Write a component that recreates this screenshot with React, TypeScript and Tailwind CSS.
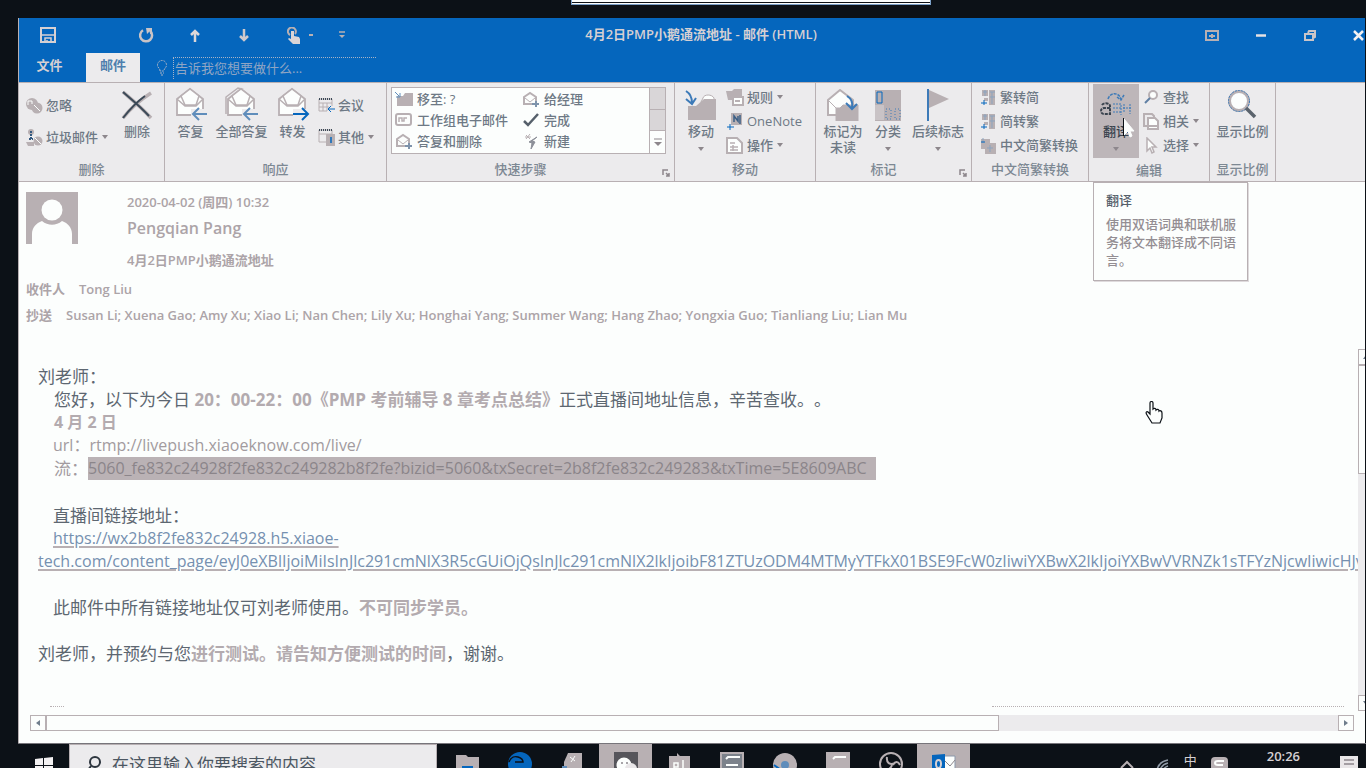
import type { ReactNode } from "react";

const INK = "#8d878c";
const GRAY = "#b8b0b3";
const BLUE = "#0566bd";

function Svg({ w, h, children, className = "" }: { w: number; h: number; children: ReactNode; className?: string }) {
  return (
    <svg width={w} height={h} viewBox={`0 0 ${w} ${h}`} fill="none" aria-hidden="true" className={`shrink-0 ${className}`}>
      {children}
    </svg>
  );
}

function Caret({ className = "" }: { className?: string }) {
  return (
    <Svg w={6} h={4} className={className}>
      <path d="M0 0h6L3 4z" fill={INK} />
    </Svg>
  );
}

/* ---------- title bar glyphs ---------- */

const SaveIcon = () => (
  <Svg w={16} h={16}>
    <path d="M1 1h14v14H1z" stroke="#d6d0d3" strokeWidth="2" />
    <path d="M2 8h12M5 15v-4h6v4M7 13v2" stroke="#d6d0d3" strokeWidth="1.500" />
  </Svg>
);
const UndoIcon = () => (
  <Svg w={16} h={16}>
    <path d="M5 3.200A6 6 0 1 0 12 3.800" stroke="#c9c3c6" strokeWidth="2.500" />
    <path d="M8 1h6v6h-2V4L9 7z" fill="#c9c3c6" />
  </Svg>
);
const ArrowUp = () => (
  <Svg w={10} h={13}>
    <path d="M5 13V2M1 6l4-4 4 4" stroke="#dcd7d9" strokeWidth="2.500" />
  </Svg>
);
const ArrowDown = () => (
  <Svg w={10} h={13}>
    <path d="M5 0v11M1 7l4 4 4-4" stroke="#cfc9cc" strokeWidth="2.500" />
  </Svg>
);
const TouchIcon = () => (
  <Svg w={14} h={17}>
    <path d="M3 8a4 4 0 1 1 5-1" stroke={GRAY} strokeWidth="2" />
    <path d="M4 4h3v5l5 1 1 2v5H6l-5-5 1-1 2 1z" fill="#d9d4d6" />
  </Svg>
);
const CustomizeIcon = () => (
  <Svg w={6} h={8}>
    <path d="M0 1h6" stroke={GRAY} strokeWidth="1.500" />
    <path d="M0 4h6L3 7z" fill={GRAY} />
  </Svg>
);
const BulbIcon = () => (
  <Svg w={12} h={16}>
    <path d="M4 11C4 8 1.500 8 1.500 5a4.500 4.500 0 0 1 9 0c0 3-2.500 3-2.500 6zM4 13h4M5 15h2" stroke="#a9b3c6" strokeDasharray="2 1" />
  </Svg>
);

/* ---------- ribbon glyphs ---------- */

const IgnoreIcon = () => (
  <Svg w={18} h={17}>
    <circle cx="7" cy="7" r="6" fill={GRAY} />
    <path d="M3 8V4h4v3" stroke="#fcfefd" />
    <circle cx="12" cy="11" r="4.500" fill={GRAY} stroke={GRAY} strokeWidth="2" />
    <path d="M9 8l6 6" stroke="#fcfefd" />
  </Svg>
);
const JunkIcon = () => (
  <Svg w={17} h={17}>
    <circle cx="5" cy="3" r="3" fill={GRAY} />
    <path d="M5 2v8M3 10h4" stroke="#33587f" strokeWidth="2" strokeDasharray="2 1" />
    <path d="M0 13h8v4H2z" fill={GRAY} />
    <circle cx="12" cy="12" r="4.500" fill={GRAY} />
    <path d="M9 9l6 6" stroke="#fcfefd" />
  </Svg>
);
const DeleteIcon = () => (
  <Svg w={32} h={30}>
    <path d="M2 2c8 7 17 14 28 26M30 3C19 10 9 19 2 28" stroke={GRAY} strokeWidth="3.500" />
    <path d="M2 2c8 7 17 14 26 24M24 6C17 11 9 19 2 28" stroke="#3b4957" strokeWidth="2" />
  </Svg>
);
function Envelope({ kind }: { kind: "reply" | "all" | "forward" }) {
  return (
    <Svg w={34} h={36}>
      {kind === "all" && <path d="M1 27V10L13 1l4 1L4 12v17" fill="#ecebed" stroke={GRAY} strokeWidth="1.500" />}
      <path d="M3 12L16 2l13 10v16H3z" fill="#fcfefd" stroke={GRAY} strokeWidth="1.800" />
      <path d="M3 12l8 7h11l7-7M7 9l9-7 9 7-3 9H11z" fill="#fcfefd" stroke={GRAY} strokeWidth="1.500" />
      <path d="M17 22h15v10H17z" fill="#ecebed" />
      {kind === "forward" ? (
        <path d="M17 27h15M26 21l6 6-6 6" stroke={BLUE} strokeWidth="2" />
      ) : (
        <path d="M33 27H19M25 21l-6 6 6 6" stroke="#5f8dbb" strokeWidth="2" />
      )}
    </Svg>
  );
}
const MeetingIcon = () => (
  <Svg w={17} h={15}>
    <path d="M1 1h13v7M1 1v12h8M1 5h13M5 5v8M9 5v8M1 9h10" stroke={GRAY} />
    <path d="M1 1h13" stroke="#3b4957" strokeWidth="2" strokeDasharray="1 1" />
    <path d="M17 11h-6M13 8l-3 3 3 3" stroke={BLUE} />
  </Svg>
);
const OtherIcon = () => (
  <Svg w={17} h={17}>
    <path d="M1 1h13v6M1 1v12h8V5M1 5h13" stroke={GRAY} />
    <path d="M1 1h13" stroke="#3b4957" strokeWidth="2" strokeDasharray="1 1" />
    <path d="M8 5h9v12H8z" fill={GRAY} />
    <path d="M13 8v6" stroke={BLUE} strokeWidth="1.500" />
  </Svg>
);
const FolderSmall = () => (
  <Svg w={18} h={15}>
    <path d="M2 5h6l2-3h8v13H2z" fill={GRAY} />
    <path d="M0 1l4 4M5 2v4H1" stroke="#5f8dbb" />
  </Svg>
);
const CardIcon = () => (
  <Svg w={18} h={13}>
    <rect x="1" y="1" width="15" height="11" rx="2" stroke={GRAY} strokeWidth="2" />
    <path d="M4 9V5h3v3h2V5h3" stroke={GRAY} strokeWidth="1.500" />
  </Svg>
);
const MailSmall = () => (
  <Svg w={18} h={16}>
    <path d="M2 6l6-4 6 4v7H2z" stroke={GRAY} strokeWidth="2" />
    <path d="M3 7l5 4 5-4" stroke={GRAY} />
    <path d="M10 13h7M14 10v6" stroke="#7e93ab" strokeWidth="2" />
  </Svg>
);
const CheckIcon = () => (
  <Svg w={16} h={14}>
    <path d="M1 8l4 4L15 1" stroke="#56606b" strokeWidth="2.500" />
  </Svg>
);
const SparkIcon = () => (
  <Svg w={14} h={16}>
    <path d="M2 2l4 4M6 1L2 6M1 4h6" stroke={GRAY} />
    <path d="M13 4l-5 4 3 1-4 7 1-6-3-1z" fill="#8d9099" stroke="#8d9099" />
  </Svg>
);
const MoveFolder = () => (
  <Svg w={32} h={30}>
    <path d="M18 8c1-4 9-4 11 0v4H16z" fill="#fcfefd" stroke={GRAY} />
    <path d="M3 16h8l8-7h12v21H3z" fill={GRAY} />
    <path d="M1 1c5 3 6 7 6 12M1 9l6 5 4-6" stroke="#3c7ab8" strokeWidth="2" />
  </Svg>
);
const RuleIcon = () => (
  <Svg w={18} h={17}>
    <path d="M0 2h6l2-2h8v11H2z" fill={GRAY} />
    <path d="M7 8h10v8H7z" fill="#fcfefd" stroke={GRAY} strokeWidth="2" />
    <path d="M9 12h5" stroke={GRAY} strokeWidth="2" />
  </Svg>
);
const NoteIcon = () => (
  <Svg w={17} h={17}>
    <path d="M4 0h11v12H4z" fill={GRAY} />
    <path d="M7 9V3l4 5V3M13 2v9" stroke="#3b5f86" strokeWidth="1.500" />
    <path d="M0 14h7M3 11v6" stroke={BLUE} />
  </Svg>
);
const ActionIcon = () => (
  <Svg w={18} h={17}>
    <path d="M1 1h10l5 5v10H1z" fill="#fcfefd" stroke={GRAY} strokeWidth="2" />
    <path d="M4 6h5M4 10h8M4 13h8M7 8v6" stroke={GRAY} strokeWidth="1.500" />
  </Svg>
);
const UnreadIcon = () => (
  <Svg w={32} h={32}>
    <path d="M1 11L13 1l13 10v15H1z" fill="#fcfefd" stroke={GRAY} strokeWidth="2" />
    <path d="M1 11l8 8M9 32V19h4l3-3h15v16z" fill={GRAY} stroke={GRAY} />
    <path d="M20 7c5 3 6 7 5 12M19 14l6 6 5-5" stroke="#3c7ab8" strokeWidth="2" />
  </Svg>
);
const CategoryIcon = () => (
  <Svg w={26} h={31}>
    <path d="M0 0h26v31H0z" fill={GRAY} />
    <path d="M0 15h9v15H0z" fill="#c9c3c6" />
    <path d="M2 2h5v11H2z" stroke={BLUE} />
    <path d="M11 19h5v10h-5zM20 19h5v10h-5z" stroke="#3c7ab8" strokeDasharray="1 2" />
  </Svg>
);
const FlagIcon = () => (
  <Svg w={24} h={32}>
    <path d="M3 1l20 9L3 19z" fill={GRAY} />
    <path d="M2 0v32" stroke="#3c7ab8" strokeWidth="2" />
  </Svg>
);
function ConvertIcon({ kind }: { kind: 1 | 2 | 3 }) {
  return (
    <Svg w={17} h={17}>
      <path d={kind === 3 ? "M1 2h9v4h6v11H5v-5H1z" : "M2 1h6v6H2zM9 1h6v15H9zM4 9h4v3H4z"} fill={GRAY} />
      <path d={kind === 3 ? "M3 1v5M10 8v7M7 11h6" : "M3 3h4M5 1v6M10 3h5M10 8h5M12 3v12"} stroke="#8ba3bf" />
      <path d={kind === 3 ? "M1 5h4" : "M1 14h6M4 11v5"} stroke={BLUE} />
    </Svg>
  );
}
const TranslateIcon = () => (
  <Svg w={34} h={26}>
    <path d="M9 7c2-7 11-7 13 0M18 5l4 3 3-5" stroke="#3c7ab8" strokeWidth="1.500" strokeDasharray="3 1" />
    <path d="M3 13c2-3 8-2 8 1v8H5c-4 0-4-6 0-6h6" stroke="#39434e" strokeWidth="2" strokeDasharray="3 1" />
    <path d="M14 12h8v11M14 16h8M14 20h8M25 12v8M31 12v10M24 16h9" stroke="#3c7ab8" strokeDasharray="2 1" />
  </Svg>
);
const FindIcon = () => (
  <Svg w={16} h={15}>
    <circle cx="10" cy="5" r="4" fill="#fcfefd" stroke={GRAY} strokeWidth="2" />
    <path d="M7 8l-5 5" stroke="#5f7fa3" strokeWidth="2" />
  </Svg>
);
const RelatedIcon = () => (
  <Svg w={16} h={17}>
    <path d="M1 1h8l2 2v10H1z" stroke={GRAY} strokeWidth="2" />
    <path d="M5 5h7l3 3v8H5z" fill="#fcfefd" stroke={GRAY} strokeWidth="2" />
    <path d="M6 13h8" stroke={GRAY} strokeWidth="2" />
  </Svg>
);
const SelectIcon = () => (
  <Svg w={16} h={17}>
    <path d="M4 1l9 9H9l2 5-2 1-2-5-3 3z" fill="#fcfefd" stroke={GRAY} strokeWidth="1.500" />
  </Svg>
);
const ZoomIcon = () => (
  <Svg w={32} h={32}>
    <circle cx="12" cy="12" r="9.500" fill="#fcfefd" stroke={GRAY} strokeWidth="3" />
    <circle cx="12" cy="12" r="10.500" stroke="#3c7ab8" strokeDasharray="2 1" />
    <path d="M19 19l9 9" stroke="#5b636d" strokeWidth="3.500" />
  </Svg>
);

/* ---------- ribbon building blocks ---------- */

function Group({ label, width, launcher = false, children }: { label: string; width: string; launcher?: boolean; children: ReactNode }) {
  return (
    <section aria-label={label} className={`relative flex shrink-0 flex-col border-r border-[#b8b0b3] ${width}`}>
      <div className="flex flex-1">{children}</div>
      <div className={`flex h-6 items-center justify-center text-[#7d8893] ${launcher ? "pr-5" : ""}`}>{label}</div>
      {launcher && (
        <button type="button" aria-label={`${label} 选项`} className="absolute right-0 bottom-0 p-1">
          <Svg w={8} h={8}>
            <path d="M1 6V1h5M4 4l3 3M7 4v3H4" stroke={INK} strokeWidth="1.500" />
          </Svg>
        </button>
      )}
    </section>
  );
}

function Big({ icon, label, second, caret = false, width }: { icon: ReactNode; label: string; second?: string; caret?: boolean; width: string }) {
  return (
    <button type="button" className={`flex flex-col items-center pt-1 ${width}`}>
      <span className="flex h-9 items-center">{icon}</span>
      <span className="leading-4 whitespace-nowrap">{label}</span>
      {second && <span className="leading-4">{second}</span>}
      {caret && <Caret className="mt-2" />}
    </button>
  );
}

function Row({ icon, label, caret = false }: { icon: ReactNode; label: string; caret?: boolean }) {
  return (
    <button type="button" className="flex h-6 items-center gap-1 whitespace-nowrap">
      <span className="flex w-4 justify-center">{icon}</span>
      <span>{label}</span>
      {caret && <Caret />}
    </button>
  );
}

function Step({ icon, label }: { icon: ReactNode; label: string }) {
  return (
    <button type="button" className="flex h-[21px] items-center gap-1 whitespace-nowrap">
      <span className="flex w-[18px] justify-center">{icon}</span>
      <span>{label}</span>
    </button>
  );
}

function Ribbon() {
  return (
    <div className="flex h-[100px] shrink-0 border-y border-[#b8b0b3] bg-[#ecebed] text-[13px] leading-4 font-medium text-[#6e7985]">
      <Group label="删除" width="w-[146px]">
        <div className="flex w-[92px] flex-col gap-2 pt-[10px] pl-[7px]">
          <Row icon={<IgnoreIcon />} label="忽略" />
          <Row icon={<JunkIcon />} label="垃圾邮件" caret />
        </div>
        <Big icon={<DeleteIcon />} label="删除" width="w-[52px]" />
      </Group>
      <Group label="响应" width="w-[222px]">
        <Big icon={<Envelope kind="reply" />} label="答复" width="w-[51px]" />
        <Big icon={<Envelope kind="all" />} label="全部答复" width="w-[51px]" />
        <Big icon={<Envelope kind="forward" />} label="转发" width="w-[51px]" />
        <div className="flex flex-col gap-2 pt-[10px]">
          <Row icon={<MeetingIcon />} label="会议" />
          <Row icon={<OtherIcon />} label="其他" caret />
        </div>
      </Group>
      <Group label="快速步骤" width="w-[288px]" launcher>
        <div className="ml-1 mt-1 flex h-[67px] w-[275px] border border-[#b8b0b3] bg-[#fcfefd]">
          <div className="grid flex-1 grid-cols-2 content-start pl-[3px]">
            <Step icon={<FolderSmall />} label="移至: ?" />
            <Step icon={<MailSmall />} label="给经理" />
            <Step icon={<CardIcon />} label="工作组电子邮件" />
            <Step icon={<CheckIcon />} label="完成" />
            <Step icon={<MailSmall />} label="答复和删除" />
            <Step icon={<SparkIcon />} label="新建" />
          </div>
          <div className="grid w-4 grid-rows-3 divide-y divide-[#b8b0b3] border-l border-[#b8b0b3]">
            <button type="button" aria-label="上一行" className="bg-[#d9d6d8]" />
            <button type="button" aria-label="下一行" className="bg-[#d9d6d8]" />
            <button type="button" aria-label="更多步骤" className="flex items-center justify-center">
              <CaretBar />
            </button>
          </div>
        </div>
      </Group>
      <Group label="移动" width="w-[141px]">
        <Big icon={<MoveFolder />} label="移动" caret width="w-[52px]" />
        <div className="flex flex-col pt-[2px]">
          <Row icon={<RuleIcon />} label="规则" caret />
          <Row icon={<NoteIcon />} label="OneNote" />
          <Row icon={<ActionIcon />} label="操作" caret />
        </div>
      </Group>
      <Group label="标记" width="w-[156px]" launcher>
        <Big icon={<UnreadIcon />} label="标记为" second="未读" width="w-[54px]" />
        <Big icon={<CategoryIcon />} label="分类" caret width="w-9" />
        <Big icon={<FlagIcon />} label="后续标志" caret width="w-[64px]" />
      </Group>
      <Group label="中文简繁转换" width="w-[117px]">
        <div className="flex flex-col pt-[2px] pl-2">
          <Row icon={<ConvertIcon kind={1} />} label="繁转简" />
          <Row icon={<ConvertIcon kind={2} />} label="简转繁" />
          <Row icon={<ConvertIcon kind={3} />} label="中文简繁转换" />
        </div>
      </Group>
      <Group label="编辑" width="w-[121px]">
        <div className="relative ml-1 flex">
          <button type="button" aria-describedby="translate-tip" className="mt-[1px] flex h-[74px] w-[46px] flex-col items-center bg-[#bdb6b9] pt-[3px] text-[#39434e]">
            <span className="flex h-9 items-center">
              <TranslateIcon />
            </span>
            <span>翻译</span>
            <Caret className="mt-2" />
          </button>
          <div
            id="translate-tip"
            role="tooltip"
            className="absolute top-[99px] left-0 z-10 h-[99px] w-[155px] border border-[#b8b0b3] bg-[#fcfefd] py-2 pr-2 pl-3 leading-[18px] text-[#948e93] shadow-[1px_1px_0_#dedadc]"
          >
            <p className="mb-[6px] text-[#56606b]">翻译</p>
            <p>使用双语词典和联机服务将文本翻译成不同语言。</p>
          </div>
          <svg width="12" height="20" viewBox="0 0 12 20" aria-hidden="true" className="absolute top-[35px] left-[30px]">
            <path d="M1 1v16l4-4 2 6 2-1-2-5h4z" fill="#fcfefd" stroke="#fcfefd" />
            <path d="M0.500 0v18" stroke="#0c1117" />
          </svg>
        </div>
        <div className="flex flex-col pt-[2px] pl-1">
          <Row icon={<FindIcon />} label="查找" />
          <Row icon={<RelatedIcon />} label="相关" caret />
          <Row icon={<SelectIcon />} label="选择" caret />
        </div>
      </Group>
      <Group label="显示比例" width="w-[66px]">
        <Big icon={<ZoomIcon />} label="显示比例" width="w-full" />
      </Group>
    </div>
  );
}

function CaretBar() {
  return (
    <Svg w={8} h={8}>
      <path d="M0 1h8" stroke={INK} />
      <path d="M0 4h8L4 8z" fill={INK} />
    </Svg>
  );
}

/* ---------- window chrome ---------- */

function TitleBar() {
  const cell = "flex h-full w-[49px] items-center justify-center";
  return (
    <header className="shrink-0 bg-[#0566bd] text-[13px] text-[#d6d0d3]">
      <div className="-mr-[18px] grid h-[34px] grid-cols-[1fr_auto_1fr] items-center">
        <div className="flex h-full pl-1">
          <button type="button" aria-label="保存" className={cell}><SaveIcon /></button>
          <span className="w-[49px]" />
          <button type="button" aria-label="撤消" className={cell}><UndoIcon /></button>
          <button type="button" aria-label="上一项" className={cell}><ArrowUp /></button>
          <button type="button" aria-label="下一项" className={cell}><ArrowDown /></button>
          <button type="button" aria-label="触摸模式" className="flex h-full w-[49px] items-center justify-end gap-2 pr-1">
            <TouchIcon />
            <Svg w={4} h={3}><path d="M0 0h4v2H0z" fill={GRAY} /></Svg>
          </button>
          <button type="button" aria-label="自定义快速访问工具栏" className={cell}><CustomizeIcon /></button>
        </div>
        <h1 className="font-semibold whitespace-nowrap">4月2日PMP小鹅通流地址 - 邮件 (HTML)</h1>
        <div className="flex h-full justify-end">
          <button type="button" aria-label="功能区显示选项" className={cell}>
            <Svg w={14} h={11}>
              <path d="M1 1h12v9H1z" stroke={GRAY} strokeWidth="2" />
              <path d="M4 6h6M7 4v4" stroke={GRAY} strokeWidth="2" />
            </Svg>
          </button>
          <button type="button" aria-label="最小化" className={cell}>
            <Svg w={10} h={3}><path d="M0 1.500h10" stroke="#e6e2e4" strokeWidth="2.500" /></Svg>
          </button>
          <button type="button" aria-label="还原" className={cell}>
            <Svg w={12} h={11}>
              <path d="M4 3l1-2h6v6l-2 1M1 4h8v6H1z" stroke="#cbc5c8" strokeWidth="2" />
            </Svg>
          </button>
          <button type="button" aria-label="关闭" className={cell}>
            <Svg w={11} h={11}><path d="M1 1l9 9M10 1l-9 9" stroke="#f3f1f2" strokeWidth="2.500" /></Svg>
          </button>
        </div>
      </div>
      <nav className="flex h-[30px] items-end">
        <button type="button" className="h-[29px] w-[67px] pr-[6px] pb-1 font-semibold">文件</button>
        <button type="button" className="h-[29px] w-[54px] bg-[#ecebed] pb-1 font-semibold text-[#4f7fae]">邮件</button>
        <label className="ml-4 flex h-[29px] items-center gap-[5px]">
          <BulbIcon />
          <input
            aria-label="告诉我您想要做什么"
            placeholder="告诉我您想要做什么..."
            className="h-[22px] w-[203px] border-t border-l border-dotted border-[#a9b3c6] bg-transparent pl-[1px] outline-none placeholder:text-[#8fa5c4]"
          />
        </label>
      </nav>
    </header>
  );
}

function MessageHeader() {
  return (
    <div className="shrink-0 pl-[7px] text-[13px] leading-5 font-semibold text-[#aca4a8]">
      <div className="flex gap-[49px] pt-[10px]">
        <Svg w={52} h={52}>
          <path d="M0 0h52v52H0z" fill={GRAY} />
          <circle cx="26" cy="18" r="10.500" fill="#fcfefd" />
          <path d="M6 52V42c0-6 4-11 10-13 6 5 14 5 20 0 6 2 10 7 10 13v10z" fill="#fcfefd" />
        </Svg>
        <div>
          <p>2020-04-02 (周四) 10:32</p>
          <p className="mt-1 text-[16px] leading-6">Pengqian Pang</p>
          <h2 className="mt-[10px]">4月2日PMP小鹅通流地址</h2>
        </div>
      </div>
      <dl className="mt-[9px] grid gap-[6px]">
        <div className="flex gap-[14px]">
          <dt>收件人</dt>
          <dd>Tong Liu</dd>
        </div>
        <div className="flex gap-[14px]">
          <dt>抄送</dt>
          <dd className="whitespace-nowrap">
            Susan Li; Xuena Gao; Amy Xu; Xiao Li; Nan Chen; Lily Xu; Honghai Yang; Summer Wang; Hang Zhao; Yongxia Guo; Tianliang Liu; Lian Mu
          </dd>
        </div>
      </dl>
    </div>
  );
}

function MessageBody() {
  const strong = "font-bold text-[#b3abaf]";
  const link = "text-[#7590b0] underline decoration-[#b8b0b3] decoration-2 underline-offset-2";
  return (
    <div className="flex min-w-0 flex-1 flex-col overflow-hidden pt-4 pl-[19px] text-[17px] leading-[23px] whitespace-nowrap text-[#5d6771] [text-spacing-trim:space-all]">
      <p>刘老师：</p>
      <p className="pl-4">
        您好，以下为今日 <b className={strong}>20：00-22：00《PMP 考前辅导 8 章考点总结》</b>正式直播间地址信息，辛苦查收。。
      </p>
      <p className={`pl-4 text-[16px] ${strong}`}>4 月 2 日</p>
      <p className="pl-[15px] text-[16px] text-[#a29b9f]">url：rtmp://livepush.xiaoeknow.com/live/</p>
      <p className="flex pl-4 text-[#a29b9f]">
        流：
        <span className="w-[788px] bg-[#bab2b5] text-[16px] text-[#8b858a]">
          5060_fe832c24928f2fe832c249282b8f2fe?bizid=5060&amp;txSecret=2b8f2fe832c249283&amp;txTime=5E8609ABC
        </span>
      </p>
      <p className="mt-6 pl-[15px]">直播间链接地址：</p>
      <p className="pl-[15px] text-[16px]"><a href="#live" className={link}>https://wx2b8f2fe832c24928.h5.xiaoe-</a></p>
      <p className="text-[16px]">
        <a href="#live" className={link}>
          tech.com/content_page/eyJ0eXBlIjoiMiIsInJlc291cmNlX3R5cGUiOjQsInJlc291cmNlX2lkIjoibF81ZTUzODM4MTMyYTFkX01BSE9FcW0zIiwiYXBwX2lkIjoiYXBwVVRNZk1sTFYzNjcwIiwicHJv
        </a>
      </p>
      <p className="mt-[23px] pl-[15px]">
        此邮件中所有链接地址仅可刘老师使用。<b className={strong}>不可同步学员。</b>
      </p>
      <p className="mt-[23px]">
        刘老师，并预约与您<b className={strong}>进行测试。请告知方便测试的时间</b>，谢谢。
      </p>
      <div className="mt-auto mb-1 flex justify-between pr-[14px] pl-3">
        <div className="w-[14px] border-t border-dotted border-[#b8b0b3]" />
        <div className="w-[352px] border-t border-dotted border-[#b8b0b3]" />
      </div>
    </div>
  );
}

function ScrollArrow({ d, label, className }: { d: string; label: string; className: string }) {
  return (
    <button type="button" aria-label={label} className={`flex shrink-0 items-center justify-center border border-[#b8b0b3] bg-[#fcfefd] ${className}`}>
      <Svg w={6} h={6}><path d={d} fill="#6f7d8c" /></Svg>
    </button>
  );
}

/* ---------- taskbar ---------- */

const apps: { name: string; active?: boolean; icon: ReactNode }[] = [
  { name: "文件资源管理器", icon: <><path d="M1 3h10l2 2h11v19H1z" fill={GRAY} /><path d="M7 14h11v10H7z" fill={BLUE} /></> },
  { name: "Edge", icon: <><circle cx="12" cy="12" r="12" fill={BLUE} /><path d="M1 10c2-5 6-6 9-5s5 3 5 5H7" stroke="#0c1117" strokeWidth="1.500" /></> },
  { name: "便笺", icon: <><path d="M7 1h14v23H3V10z" fill={GRAY} /><path d="M9 5l5 4M14 4l-4 6" stroke="#fcfefd" /><path d="M1 14h5v10H1z" fill="#5f8dbb" /></> },
  { name: "微信", active: true, icon: <><path d="M0 0h24v24H0z" fill="#56555b" /><circle cx="10" cy="13" r="7.500" fill="#fcfefd" /><circle cx="17" cy="17" r="6" fill="#e9e6e8" /><circle cx="8" cy="11" r="1" fill={INK} /><circle cx="13" cy="11" r="1" fill={INK} /></> },
  { name: "PowerPoint", icon: <><path d="M2 4h8V1l3 3h10v20H2z" fill={GRAY} /><path d="M7 18v-7h4v4H7M16 8v10h4" stroke="#fcfefd" strokeWidth="1.500" /></> },
  { name: "笔记", icon: <><path d="M1 1h22v23H1z" fill="#7c828b" stroke={GRAY} strokeWidth="2" /><path d="M6 7l2-2h12M6 13h12" stroke="#fcfefd" strokeWidth="2" /></> },
  { name: "浏览器", icon: <><circle cx="12" cy="13" r="12" fill={GRAY} /><circle cx="12" cy="13" r="4" fill="#5f8dbb" /><path d="M1 13l7 5" stroke={BLUE} strokeWidth="2" /></> },
  { name: "文档", icon: <><path d="M0 0h24v24H0z" fill={GRAY} /><path d="M7 7l2-2h11" stroke="#fcfefd" strokeWidth="2" /></> },
  { name: "OBS", icon: <><circle cx="12" cy="12" r="11" stroke={GRAY} strokeWidth="2" /><path d="M8 5c-1 7 4 8 8 6M14 13c2-4 5-4 7 0M5 17c4 2 7-1 8-4" stroke={GRAY} strokeWidth="2" /></> },
  { name: "Outlook", active: true, icon: <><path d="M11 4h12v20H11z" fill="#fcfefd" stroke="#8b98ab" /><path d="M12 8l6 6 5-6" stroke={INK} /><path d="M0 3l13-1v22H0z" fill={BLUE} /><ellipse cx="6.500" cy="12" rx="2.500" ry="4" stroke="#d6d0d3" strokeWidth="2" /></> },
];

function Taskbar() {
  return (
    <footer className="ml-[18px] flex h-[25px] shrink-0 items-start overflow-hidden border-t border-[#77757b]">
      <button type="button" aria-label="开始" className="flex h-[42px] w-[51px] items-center justify-center">
        <Svg w={18} h={18}>
          <path d="M0 3l8-1v7H0zM9 2l9-1v8H9zM0 10h8v7l-8-1zM9 10h9v8l-9-1z" fill="#f3f1f2" />
        </Svg>
      </button>
      <label className="flex h-[42px] w-[368px] shrink-0 items-center gap-[10px] border border-[#b8b0b3] bg-[#ecebed] pl-4">
        <Svg w={16} h={18}>
          <circle cx="9" cy="6" r="5" stroke="#2d353e" strokeWidth="2" />
          <path d="M5 10l-5 7" stroke="#2d353e" strokeWidth="2" />
        </Svg>
        <input aria-label="搜索" placeholder="在这里输入你要搜索的内容" className="flex-1 bg-transparent text-[17px] outline-none placeholder:text-[#4c5762]" />
      </label>
      <div className="flex pl-[3px]">
        {apps.map((a) => (
          <button
            key={a.name}
            type="button"
            aria-label={a.name}
            className={`flex h-10 w-[53px] justify-center pt-2 ${a.active ? "bg-[#b8b0b3]" : ""}`}
          >
            <Svg w={24} h={24}>{a.icon}</Svg>
          </button>
        ))}
      </div>
      <div className="ml-auto flex h-10 items-start pr-2">
        <Svg w={14} h={12} className="mt-4"><path d="M1 8l6-6 6 6" stroke={GRAY} strokeWidth="2" /></Svg>
        <Svg w={16} h={12} className="mt-[14px] ml-5"><path d="M3 12c1-5 5-9 11-10M6 12c1-3 3-6 8-7M9 12c1-2 2-3 5-4" stroke="#8f99a6" strokeWidth="1.500" /></Svg>
        <span className="mt-2 ml-[14px] text-[13px] leading-4 text-[#d6d0d3]">中</span>
        <Svg w={18} h={16} className="mt-3 ml-[14px]"><rect width="17" height="15" rx="4" y="1" fill={GRAY} /><path d="M13 5H7c-4 0-4 4 0 4h5" stroke="#fcfefd" strokeWidth="2" /></Svg>
        <time className="ml-[38px] text-[13px] leading-6 font-semibold text-[#d6d0d3]">20:26</time>
        <Svg w={18} h={16} className="mt-3 ml-10"><path d="M0 0h18v16H0z" fill="#e9e6e8" /><path d="M4 4h10M4 8h10" stroke={INK} strokeWidth="1.500" /></Svg>
      </div>
    </footer>
  );
}

export default function App() {
  return (
    <div className="relative flex h-screen flex-col overflow-hidden bg-[#0c1117] pt-[18px] font-['Open_Sans','Noto_Sans_CJK_SC',sans-serif]">
      <div className="absolute top-0 left-[571px] h-[5px] w-[360px] border-x border-b border-[#7ba0c8] bg-[#fcfefd]">
        <div className="mt-[2px] h-px bg-[#0c1117]" />
      </div>
      <main className="mr-[1px] ml-[18px] flex min-h-0 flex-1 flex-col overflow-hidden border-l border-[#b8b0b3] bg-[#fcfefd]">
        <TitleBar />
        <Ribbon />
        <MessageHeader />
        <div className="mt-6 flex min-h-0 flex-1">
          <MessageBody />
          <div className="-mr-[9px] flex w-4 shrink-0 flex-col bg-[#ecebed]">
            <ScrollArrow d="M0 5l3-4 3 4z" label="向上滚动" className="h-4" />
            <div className="h-[109px] border border-[#b8b0b3] bg-[#fcfefd]" />
            <div className="flex-1" />
            <ScrollArrow d="M0 1l3 4 3-4z" label="向下滚动" className="h-4" />
          </div>
        </div>
        <div className="mr-[11px] mt-1 mb-3 ml-[11px] flex h-4 shrink-0 bg-[#ecebed]">
          <ScrollArrow d="M5 0L1 3l4 3z" label="向左滚动" className="w-4" />
          <div className="w-[72%] border border-[#b8b0b3] bg-[#fcfefd]" />
          <div className="flex-1" />
          <ScrollArrow d="M1 0l4 3-4 3z" label="向右滚动" className="w-4" />
        </div>
      </main>
      <Taskbar />
      <svg width="18" height="24" viewBox="0 0 18 24" aria-hidden="true" className="absolute top-[401px] left-[1145px]">
        <path d="M5 13V2c0-2 3-2 3 0v6c1-1 3-1 3 1 1-1 3-1 3 1 1-1 3 0 3 2v5l-2 5H7l-5-8c-2-3 0-4 1-3z" fill="#fcfefd" stroke="#0c1117" strokeWidth="1.200" />
      </svg>
    </div>
  );
}
